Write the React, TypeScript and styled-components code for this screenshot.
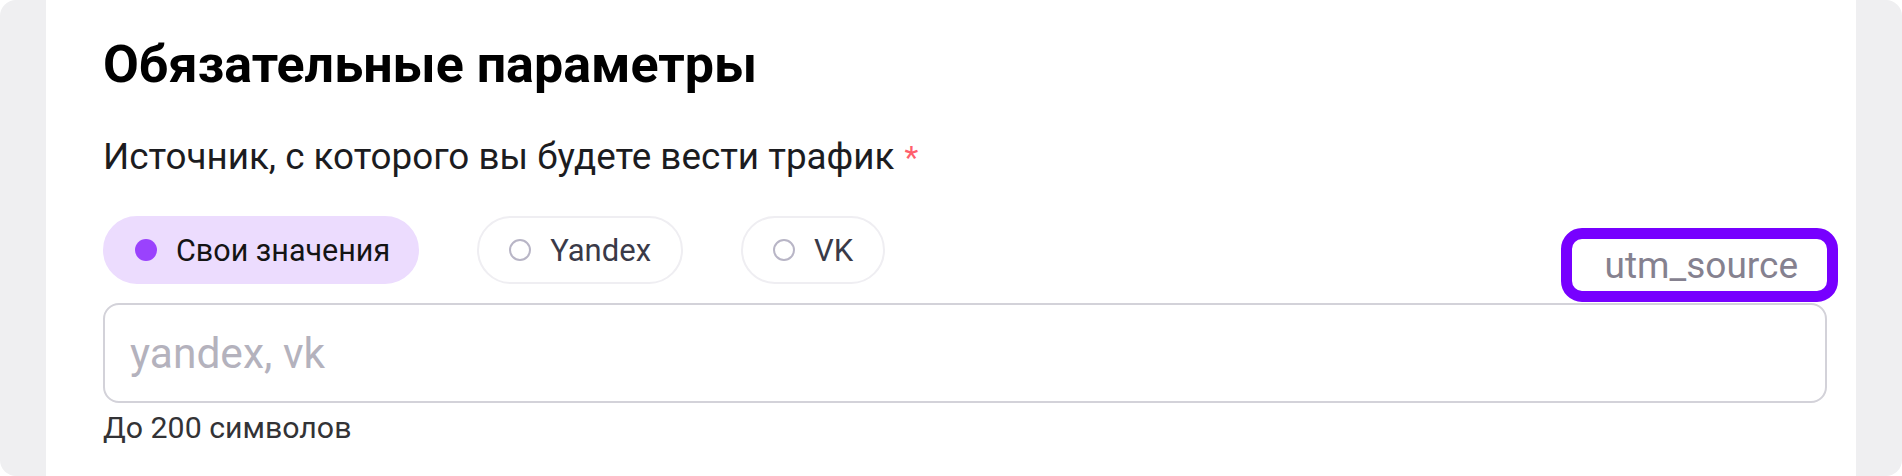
import React from "react";
import styled, { createGlobalStyle } from "styled-components";

const GlobalStyle = createGlobalStyle`
  html, body { margin: 0; padding: 0; background: #ffffff; overflow: hidden; }
  * { box-sizing: border-box; }
`;

const Frame = styled.div`
  width: 1902px;
  height: 476px;
  background: #efeff1;
  border-radius: 16px;
  padding: 0 46px;
  font-family: Roboto, "Noto Sans", sans-serif;
`;

const Card = styled.section`
  height: 100%;
  background: #ffffff;
  padding: 35px 29px 0 57px;
  display: flex;
  flex-direction: column;
`;

const Title = styled.h2`
  margin: 0;
  font-size: 52px;
  line-height: 60px;
  font-weight: 700;
  color: #000;
`;

const Label = styled.div`
  margin-top: 42px;
  font-size: 36.8px;
  line-height: 40px;
  color: #1c1c1f;
`;

const Required = styled.span`
  color: #ff5f6d;
  font-size: 32px;
  vertical-align: top;
  margin-left: 10px;
`;

const ChoiceRow = styled.div`
  margin-top: 39px;
  display: flex;
  justify-content: space-between;
  align-items: flex-start;
`;

const Chips = styled.div`
  display: flex;
  gap: 58px;
`;

const Chip = styled.button<{ $active?: boolean }>`
  height: 68px;
  display: flex;
  align-items: center;
  gap: 19px;
  padding: 0 ${(p) => (p.$active ? "27px" : "30px")} 0 30px;
  border-radius: 34px;
  border: 2px solid ${(p) => (p.$active ? "#ecdcfe" : "#efeef2")};
  background: ${(p) => (p.$active ? "#ecdcfe" : "#ffffff")};
  font-family: inherit;
  font-size: ${(p) => (p.$active ? "30.5px" : "31px")};
  color: ${(p) => (p.$active ? "#141414" : "#3a3a48")};
`;

const Radio = styled.span<{ $active?: boolean }>`
  width: 22px;
  height: 22px;
  border-radius: 50%;
  flex: none;
  background: ${(p) => (p.$active ? "#9a42fd" : "transparent")};
  border: ${(p) => (p.$active ? "none" : "2px solid #b8b5c6")};
`;

const ParamName = styled.div`
  margin-top: 23px;
  height: 52px;
  padding: 0 29px 0 33px;
  display: flex;
  align-items: center;
  font-size: 37px;
  color: #85818f;
  border-radius: 10px;
  outline: 11px solid #7700ff;
`;

const Input = styled.input`
  margin-top: 12px;
  height: 100px;
  width: 100%;
  border: 2px solid #d3d2d9;
  border-radius: 16px;
  padding: 0 25px;
  font-family: inherit;
  font-size: 42.5px;
  color: #1c1c1f;
  outline: none;
  &::placeholder { color: #b4b2bd; }
`;

const Hint = styled.div`
  margin-top: 7px;
  font-size: 30.3px;
  line-height: 36px;
  color: #333336;
`;

export default function App() {
  return (
    <>
      <GlobalStyle />
      <Frame>
        <Card>
          <Title>Обязательные параметры</Title>
          <Label>
            Источник, с которого вы будете вести трафик<Required>*</Required>
          </Label>
          <ChoiceRow>
            <Chips>
              <Chip $active>
                <Radio $active />
                Свои значения
              </Chip>
              <Chip>
                <Radio />
                Yandex
              </Chip>
              <Chip>
                <Radio />
                VK
              </Chip>
            </Chips>
            <ParamName>utm_source</ParamName>
          </ChoiceRow>
          <Input placeholder="yandex, vk" />
          <Hint>До 200 символов</Hint>
        </Card>
      </Frame>
    </>
  );
}
